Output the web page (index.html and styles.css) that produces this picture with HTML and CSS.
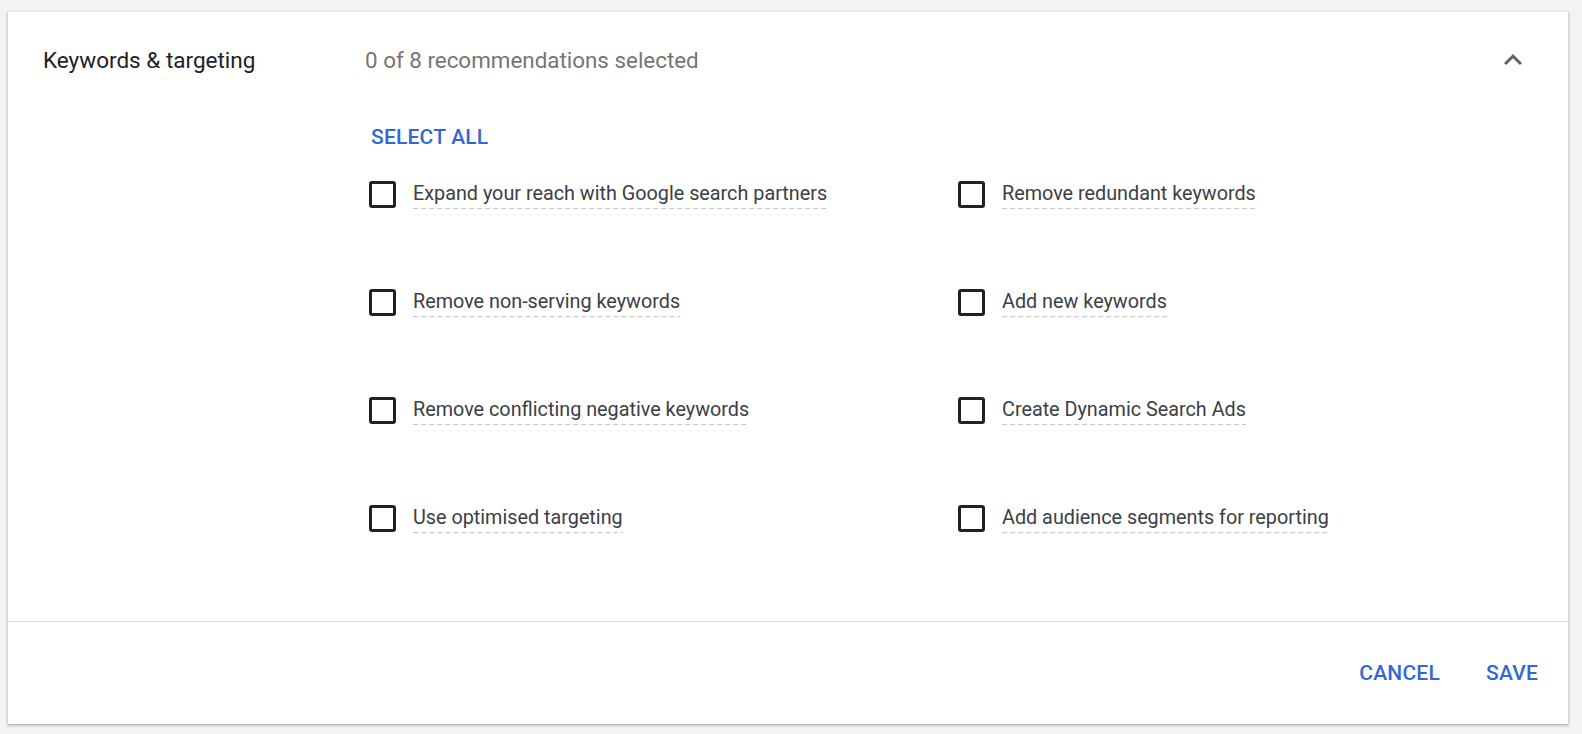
FILE: index.html
```html
<!DOCTYPE html>
<html>
<head>
  <title>Keywords &amp; targeting</title>
  <link rel="stylesheet" href="styles.css">
</head>
<body>
  <div class="card">
    <div class="card-body">
      <div class="header">
        <h2 class="title">Keywords &amp; targeting</h2>
        <span class="summary">0 of 8 recommendations selected</span>
        <button class="collapse" type="button" aria-label="Collapse">
          <svg width="24" height="24" viewBox="0 0 24 24"><path d="M7.41 15.41L12 10.83l4.59 4.58L18 14l-6-6-6 6z" fill="#5f6368"/></svg>
        </button>
      </div>

      <div class="content">
        <button class="link-btn select-all" type="button">Select all</button>

        <div class="options">
          <label class="option"><span class="box"></span><span class="option-text">Expand your reach with Google search partners</span></label>
          <label class="option"><span class="box"></span><span class="option-text">Remove redundant keywords</span></label>
          <label class="option"><span class="box"></span><span class="option-text">Remove non-serving keywords</span></label>
          <label class="option"><span class="box"></span><span class="option-text">Add new keywords</span></label>
          <label class="option"><span class="box"></span><span class="option-text">Remove conflicting negative keywords</span></label>
          <label class="option"><span class="box"></span><span class="option-text">Create Dynamic Search Ads</span></label>
          <label class="option"><span class="box"></span><span class="option-text">Use optimised targeting</span></label>
          <label class="option"><span class="box"></span><span class="option-text">Add audience segments for reporting</span></label>
        </div>
      </div>
    </div>

    <div class="footer">
      <button class="link-btn" type="button">Cancel</button>
      <button class="link-btn" type="button">Save</button>
    </div>
  </div>
</body>
</html>
```

FILE: styles.css
```css
body {
  margin: 0;
  padding: 12px 14px 10px 8px;
  background-color: #f1f3f4;
  font-family: Roboto, "Liberation Sans", Arial, sans-serif;
}

.card {
  background-color: #fff;
  box-shadow: 0 1px 2px rgba(60, 64, 67, 0.3), 0 1px 3px 1px rgba(60, 64, 67, 0.15);
}

.card-body {
  box-sizing: border-box;
  height: 610px;
  padding: 33px 30px 0 35px;
  border-bottom: 1px solid #dadce0;
}

.header {
  display: flex;
  align-items: center;
  height: 30px;
}

.title {
  width: 322px;
  margin: 0;
  font-size: 22.5px;
  font-weight: 400;
  color: #202124;
}

.summary {
  flex: 1;
  font-size: 22.4px;
  color: #757575;
}

.collapse {
  display: flex;
  margin-right: 7px;
  padding: 0;
  border: none;
  background: none;
}

.collapse svg {
  width: 36px;
  height: 36px;
}

.content {
  margin-left: 322px;
}

.link-btn {
  padding: 0;
  border: none;
  background: none;
  font-family: inherit;
  font-size: 21px;
  font-weight: 500;
  letter-spacing: 0.2px;
  text-transform: uppercase;
  color: #3367d6;
  cursor: pointer;
}

.select-all {
  display: block;
  margin: 47px 0 0 6px;
  line-height: 30px;
}

.options {
  display: grid;
  grid-template-columns: 589px 1fr;
  grid-auto-rows: 108px;
  margin-top: 28px;
}

.option {
  display: flex;
  align-items: flex-start;
  height: 30px;
}

.box {
  box-sizing: border-box;
  width: 27px;
  height: 27px;
  margin: 1px 17px 0 4px;
  border: 3px solid #212121;
  border-radius: 3px;
}

.option-text {
  padding-bottom: 1px;
  font-size: 19.8px;
  line-height: 28px;
  color: #3c4043;
  background-image: repeating-linear-gradient(to right, #c6c6c6 0 5px, transparent 5px 8px);
  background-size: 100% 1px;
  background-repeat: no-repeat;
  background-position: left bottom;
}

.footer {
  display: flex;
  justify-content: flex-end;
  align-items: center;
  gap: 46px;
  height: 102px;
  padding-right: 30px;
}
```
